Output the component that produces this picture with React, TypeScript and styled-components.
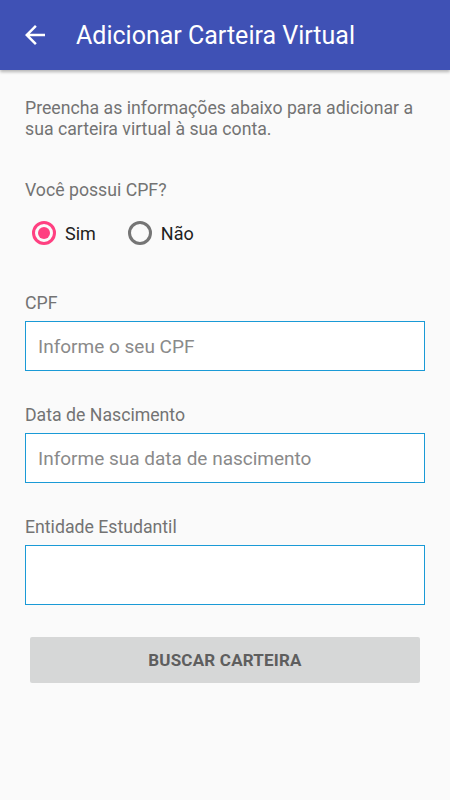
import { useState } from "react";
import styled, { createGlobalStyle } from "styled-components";

const GlobalStyle = createGlobalStyle`
    body {
        margin: 0;
        background: #fafafa;
        font-family: Roboto, "Noto Sans", sans-serif;
    }
`;

const Page = styled.div`
    width: 450px;
    min-height: 800px;
    background: #fafafa;
`;

const AppBar = styled.header`
    height: 70px;
    background: #3f51b5;
    display: flex;
    align-items: center;
    box-shadow: 0 2px 3px rgba(0, 0, 0, 0.28);
`;

const BackButton = styled.button`
    width: 30px;
    height: 30px;
    margin-left: 20px;
    padding: 0;
    border: none;
    background: none;
    display: flex;
    cursor: pointer;
`;

const Title = styled.h1`
    margin: 0 0 0 26px;
    color: #ffffff;
    font-size: 25px;
    font-weight: 400;
`;

const Content = styled.main`
    padding: 28px 25px 0;
    display: flex;
    flex-direction: column;
`;

const Intro = styled.p`
    margin: 0;
    font-size: 17.7px;
    line-height: 21px;
    color: #737373;
`;

const Question = styled.div`
    margin-top: 40px;
    font-size: 17.7px;
    line-height: 21px;
    color: #737373;
`;

const RadioRow = styled.div`
    margin-top: 8px;
    height: 48px;
    display: flex;
    align-items: center;
    padding-left: 7px;
    gap: 32px;
`;

const RadioOption = styled.label`
    display: flex;
    align-items: center;
    gap: 9px;
    font-size: 18px;
    color: #212121;
    cursor: pointer;
`;

const RadioCircle = styled.span<{ $checked: boolean }>`
    width: 24px;
    height: 24px;
    box-sizing: border-box;
    border-radius: 50%;
    border: 3px solid ${(p) => (p.$checked ? "#ff4081" : "#757575")};
    display: flex;
    align-items: center;
    justify-content: center;
    &::after {
        content: "";
        width: 12px;
        height: 12px;
        border-radius: 50%;
        background: ${(p) => (p.$checked ? "#ff4081" : "transparent")};
    }
`;

const Field = styled.div<{ $first?: boolean }>`
    margin-top: ${(p) => (p.$first ? "36px" : "34px")};
    display: flex;
    flex-direction: column;
    gap: 7px;
`;

const Label = styled.div`
    font-size: 17.7px;
    line-height: 21px;
    color: #737373;
`;

const Input = styled.input<{ $tall?: boolean }>`
    height: ${(p) => (p.$tall ? "60px" : "50px")};
    box-sizing: border-box;
    border: 1px solid #1a9ad6;
    background: #ffffff;
    padding: 0 12px;
    font-family: Roboto, "Noto Sans", sans-serif;
    font-size: 19px;
    color: #212121;
    outline: none;
    &::placeholder {
        color: #8a8a8a;
    }
`;

const SubmitButton = styled.button`
    margin: 32px 5px 0;
    height: 46px;
    border: none;
    border-radius: 2px;
    background: #d6d7d7;
    color: #5e5e5e;
    font-family: Roboto, "Noto Sans", sans-serif;
    font-size: 17px;
    font-weight: 700;
    letter-spacing: 0.2px;
    cursor: pointer;
`;

const App = () => {
    const [hasCpf, setHasCpf] = useState(true);

    return (
        <Page>
            <GlobalStyle />
            <AppBar>
                <BackButton aria-label="Voltar">
                    <svg width="30" height="30" viewBox="0 0 24 24" fill="#ffffff">
                        <path d="M20 11H7.83l5.59-5.59L12 4l-8 8 8 8 1.41-1.41L7.83 13H20v-2z" />
                    </svg>
                </BackButton>
                <Title>Adicionar Carteira Virtual</Title>
            </AppBar>
            <Content>
                <Intro>Preencha as informações abaixo para adicionar a sua carteira virtual à sua conta.</Intro>
                <Question>Você possui CPF?</Question>
                <RadioRow>
                    <RadioOption onClick={() => setHasCpf(true)}>
                        <RadioCircle $checked={hasCpf} />
                        Sim
                    </RadioOption>
                    <RadioOption onClick={() => setHasCpf(false)}>
                        <RadioCircle $checked={!hasCpf} />
                        Não
                    </RadioOption>
                </RadioRow>
                <Field $first>
                    <Label>CPF</Label>
                    <Input placeholder="Informe o seu CPF" />
                </Field>
                <Field>
                    <Label>Data de Nascimento</Label>
                    <Input placeholder="Informe sua data de nascimento" />
                </Field>
                <Field>
                    <Label>Entidade Estudantil</Label>
                    <Input $tall />
                </Field>
                <SubmitButton>BUSCAR CARTEIRA</SubmitButton>
            </Content>
        </Page>
    );
};

export default App;
